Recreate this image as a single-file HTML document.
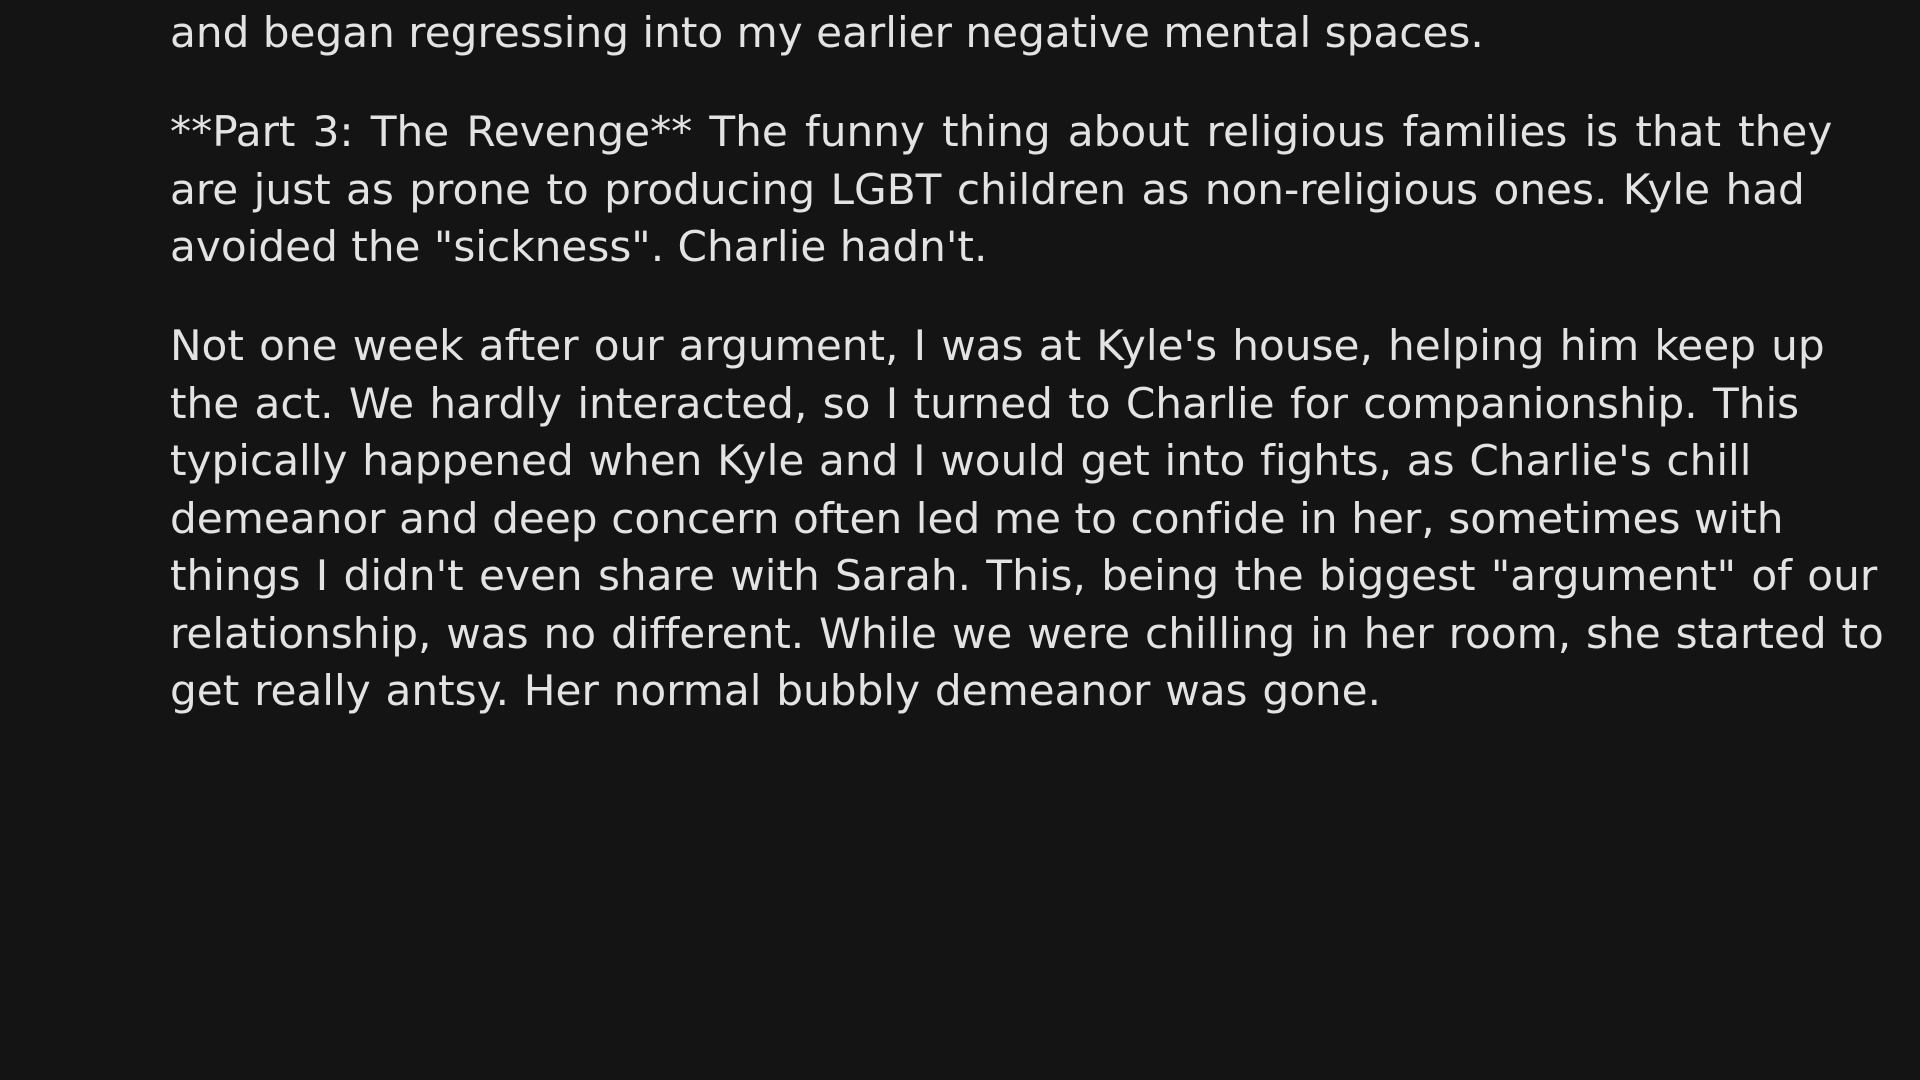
<!DOCTYPE html>
<html><head><meta charset="utf-8"><style>
html,body{margin:0;padding:0;background:#141414;width:1920px;height:1080px;overflow:hidden}
.c{position:absolute;left:170px;top:4px;font-family:"DejaVu Sans","Liberation Sans",sans-serif;font-size:42.2px;line-height:57.5px;color:#e3e3e3;white-space:nowrap;font-variant-ligatures:none}
p{margin:0 0 41.5px 0}
span{display:block}
</style></head><body><div class="c">
<p><span>and began regressing into my earlier negative mental spaces.</span></p>
<p><span style="word-spacing:3.7px">**Part 3: The Revenge** The funny thing about religious families is that they</span><span style="word-spacing:2px">are just as prone to producing LGBT children as non-religious ones. Kyle had</span><span>avoided the "sickness". Charlie hadn't.</span></p>
<p><span style="word-spacing:1.75px">Not one week after our argument, I was at Kyle's house, helping him keep up</span><span style="word-spacing:1.9px">the act. We hardly interacted, so I turned to Charlie for companionship. This</span><span style="word-spacing:1.3px">typically happened when Kyle and I would get into fights, as Charlie's chill</span><span style="word-spacing:0.2px">demeanor and deep concern often led me to confide in her, sometimes with</span><span style="word-spacing:1.9px">things I didn't even share with Sarah. This, being the biggest "argument" of our</span><span style="word-spacing:1.5px">relationship, was no different. While we were chilling in her room, she started to</span><span style="word-spacing:1.4px">get really antsy. Her normal bubbly demeanor was gone.</span></p>
</div></body></html>
